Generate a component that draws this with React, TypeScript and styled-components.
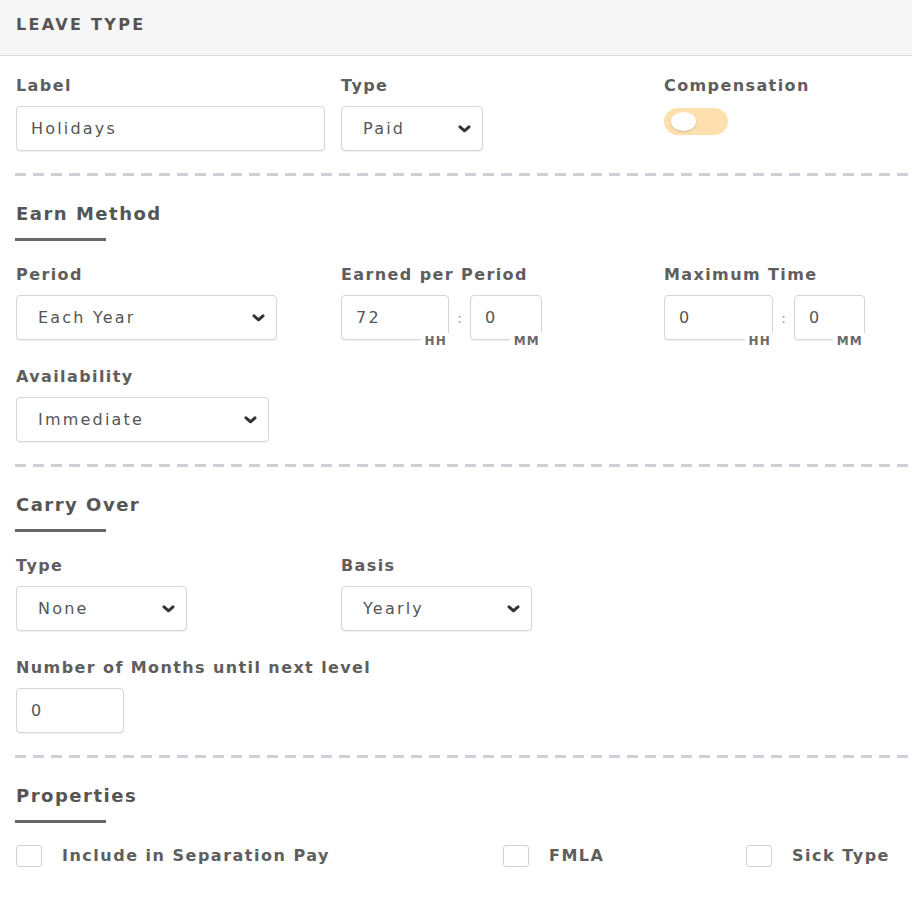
import React from "react";
import styled, { createGlobalStyle } from "styled-components";

const GlobalStyle = createGlobalStyle`
  *, *::before, *::after { box-sizing: border-box; }
  html, body { margin: 0; padding: 0; background: #ffffff; }
  body {
    font-family: "DejaVu Sans", Verdana, sans-serif;
    color: #555555;
    width: 912px;
    overflow: hidden;
  }
`;

const Header = styled.div`
  height: 56px;
  background: #f6f6f6;
  border-bottom: 1px solid #dcdcdc;
  padding: 15px 0 0 16px;
`;

const HeaderTitle = styled.div`
  font-size: 16px;
  font-weight: 700;
  letter-spacing: 2.3px;
  line-height: 20px;
  color: #555555;
`;

const Body = styled.div`
  padding: 20px 0 0 16px;
`;

const Row = styled.div<{ $mt?: number }>`
  display: grid;
  grid-template-columns: 325px 323px 1fr;
  align-items: start;
  margin-top: ${(p) => p.$mt ?? 0}px;
`;

const Field = styled.div`
  display: flex;
  flex-direction: column;
  align-items: flex-start;
  gap: 10px;
`;

const FieldLabel = styled.div`
  font-size: 16px;
  font-weight: 700;
  letter-spacing: 1.4px;
  line-height: 20px;
  color: #5e5e5e;
  white-space: nowrap;
`;

const TextInput = styled.input<{ $w: number }>`
  width: ${(p) => p.$w}px;
  height: 45px;
  border: 1px solid #d3d6db;
  border-radius: 4px;
  padding: 0 14px;
  font-family: "DejaVu Sans", Verdana, sans-serif;
  font-size: 16px;
  letter-spacing: 2.2px;
  color: #555555;
  background: #ffffff;
  box-shadow: 0 1px 1px rgba(0, 0, 0, 0.06);
  outline: none;
  display: block;
`;

const SelectBox = styled.div<{ $w: number }>`
  width: ${(p) => p.$w}px;
  height: 45px;
  border: 1px solid #d3d6db;
  border-radius: 4px;
  padding: 0 11px 0 21px;
  display: flex;
  align-items: center;
  justify-content: space-between;
  font-size: 16px;
  letter-spacing: 2.2px;
  color: #555555;
  background: #ffffff;
  box-shadow: 0 1px 1px rgba(0, 0, 0, 0.06);
`;

const Chevron = () => (
  <svg width="13" height="8" viewBox="0 0 13 8" aria-hidden="true">
    <path d="M2 1.8 L6.5 5.8 L11 1.8" fill="none" stroke="#333" strokeWidth="3" strokeLinecap="round" strokeLinejoin="round" />
  </svg>
);

const Select = ({ w, value }: { w: number; value: string }) => (
  <SelectBox $w={w}>
    <span>{value}</span>
    <Chevron />
  </SelectBox>
);

const Toggle = styled.div`
  width: 64px;
  height: 27px;
  margin-top: 2px;
  border-radius: 14px;
  background: #fde0ad;
  display: flex;
  align-items: center;
  padding-left: 7px;
`;

const Knob = styled.div`
  width: 25px;
  height: 19px;
  border-radius: 50%;
  background: #ffffff;
  box-shadow: 0 1px 2px rgba(0, 0, 0, 0.18);
`;

const Divider = styled.div`
  height: 3px;
  margin: 22px 0 0 -1px;
  background: repeating-linear-gradient(
    to right,
    #cdd1d7 0,
    #cdd1d7 11px,
    transparent 11px,
    transparent 18px
  );
`;

const SectionTitle = styled.div`
  margin-top: 26px;
  font-size: 18px;
  font-weight: 700;
  letter-spacing: 1.5px;
  line-height: 24px;
  color: #555555;
`;

const Underline = styled.div`
  width: 91px;
  height: 3px;
  margin: 12px 0 0 -1px;
  background: #666666;
`;

const TimeGroup = styled.div`
  display: flex;
  align-items: flex-start;
`;

const TimeBox = styled.div`
  position: relative;
`;

const TimeSub = styled.span`
  position: absolute;
  right: -1px;
  bottom: -9px;
  padding: 0 3px 0 4px;
  background: #ffffff;
  font-size: 12px;
  font-weight: 700;
  letter-spacing: 1.2px;
  line-height: 16px;
  color: #6a6a6a;
`;

const Colon = styled.span`
  width: 21px;
  height: 45px;
  display: flex;
  align-items: center;
  justify-content: center;
  font-size: 14px;
  color: #999999;
`;

const TimeInput = ({ h, m, hw, mw }: { h: string; m: string; hw: number; mw: number }) => (
  <TimeGroup>
    <TimeBox>
      <TextInput $w={hw} readOnly value={h} />
      <TimeSub>HH</TimeSub>
    </TimeBox>
    <Colon>:</Colon>
    <TimeBox>
      <TextInput $w={mw} readOnly value={m} />
      <TimeSub>MM</TimeSub>
    </TimeBox>
  </TimeGroup>
);

const CheckRow = styled.div`
  display: grid;
  grid-template-columns: 487px 243px 1fr;
  align-items: center;
  margin-top: 22px;
`;

const CheckItem = styled.label`
  display: flex;
  align-items: center;
  gap: 20px;
  font-size: 16px;
  font-weight: 700;
  letter-spacing: 1.5px;
  line-height: 20px;
  color: #5e5e5e;
  white-space: nowrap;
`;

const CheckBox = styled.span`
  width: 26px;
  height: 22px;
  border: 1px solid #cfd2d6;
  border-radius: 3px;
  background: #ffffff;
  flex: none;
`;

export default function App() {
  return (
    <>
      <GlobalStyle />
      <Header>
        <HeaderTitle>LEAVE TYPE</HeaderTitle>
      </Header>
      <Body>
        <Row>
          <Field>
            <FieldLabel>Label</FieldLabel>
            <TextInput $w={309} readOnly value="Holidays" />
          </Field>
          <Field>
            <FieldLabel>Type</FieldLabel>
            <Select w={142} value="Paid" />
          </Field>
          <Field>
            <FieldLabel>Compensation</FieldLabel>
            <Toggle>
              <Knob />
            </Toggle>
          </Field>
        </Row>
        <Divider />

        <SectionTitle>Earn Method</SectionTitle>
        <Underline />
        <Row $mt={24}>
          <Field>
            <FieldLabel>Period</FieldLabel>
            <Select w={261} value="Each Year" />
          </Field>
          <Field>
            <FieldLabel>Earned per Period</FieldLabel>
            <TimeInput h="72" m="0" hw={108} mw={72} />
          </Field>
          <Field>
            <FieldLabel>Maximum Time</FieldLabel>
            <TimeInput h="0" m="0" hw={109} mw={71} />
          </Field>
        </Row>
        <Row $mt={27}>
          <Field>
            <FieldLabel>Availability</FieldLabel>
            <Select w={253} value="Immediate" />
          </Field>
        </Row>
        <Divider />

        <SectionTitle>Carry Over</SectionTitle>
        <Underline />
        <Row $mt={24}>
          <Field>
            <FieldLabel>Type</FieldLabel>
            <Select w={171} value="None" />
          </Field>
          <Field>
            <FieldLabel>Basis</FieldLabel>
            <Select w={191} value="Yearly" />
          </Field>
        </Row>
        <Row $mt={27}>
          <Field>
            <FieldLabel>Number of Months until next level</FieldLabel>
            <TextInput $w={108} readOnly value="0" />
          </Field>
        </Row>
        <Divider />

        <SectionTitle>Properties</SectionTitle>
        <Underline />
        <CheckRow>
          <CheckItem>
            <CheckBox />
            Include in Separation Pay
          </CheckItem>
          <CheckItem>
            <CheckBox />
            FMLA
          </CheckItem>
          <CheckItem>
            <CheckBox />
            Sick Type
          </CheckItem>
        </CheckRow>
      </Body>
    </>
  );
}
